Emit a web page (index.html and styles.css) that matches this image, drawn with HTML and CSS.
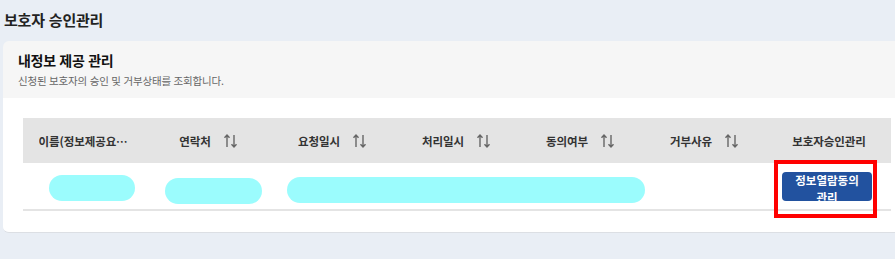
FILE: index.html
```html
<!DOCTYPE html>
<html lang="ko">
<head>
  <meta charset="UTF-8">
  <meta name="viewport" content="width=device-width, initial-scale=1.0">
  <title>보호자 승인관리</title>
  <link rel="stylesheet" href="styles.css">
</head>
<body>
<h1 class="page-title">보호자 승인관리</h1>

<div class="card">
  <div class="card-head">
    <h2>내정보 제공 관리</h2>
    <p>신청된 보호자의 승인 및 거부상태를 조회합니다.</p>
  </div>

  <div class="card-body">
    <table class="grid">
      <colgroup>
        <col><col><col><col><col><col><col>
      </colgroup>
      <thead>
        <tr>
          <th><span class="th-in"><span class="clip">이름(정보제공요청자)</span></span></th>
          <th><span class="th-in">연락처<svg class="sort" viewBox="0 0 16 16"><path d="M4 14V2M1.5 4.8L4 2l2.5 2.8"/><path d="M11 2v12M8.5 11.2L11 14l2.5-2.8"/></svg></span></th>
          <th><span class="th-in">요청일시<svg class="sort" viewBox="0 0 16 16"><path d="M4 14V2M1.5 4.8L4 2l2.5 2.8"/><path d="M11 2v12M8.5 11.2L11 14l2.5-2.8"/></svg></span></th>
          <th><span class="th-in">처리일시<svg class="sort" viewBox="0 0 16 16"><path d="M4 14V2M1.5 4.8L4 2l2.5 2.8"/><path d="M11 2v12M8.5 11.2L11 14l2.5-2.8"/></svg></span></th>
          <th><span class="th-in">동의여부<svg class="sort" viewBox="0 0 16 16"><path d="M4 14V2M1.5 4.8L4 2l2.5 2.8"/><path d="M11 2v12M8.5 11.2L11 14l2.5-2.8"/></svg></span></th>
          <th><span class="th-in">거부사유<svg class="sort" viewBox="0 0 16 16"><path d="M4 14V2M1.5 4.8L4 2l2.5 2.8"/><path d="M11 2v12M8.5 11.2L11 14l2.5-2.8"/></svg></span></th>
          <th><span class="th-in">보호자승인관리</span></th>
        </tr>
      </thead>
      <tbody>
        <tr>
          <td><span class="mask mask-name"></span></td>
          <td><span class="mask mask-tel"></span></td>
          <td colspan="3"><span class="mask mask-date"></span></td>
          <td></td>
          <td class="action-cell">
            <button class="agree-btn">정보열람동의 관리</button>
            <span class="mark"></span>
          </td>
        </tr>
      </tbody>
    </table>
  </div>
</div>
</body>
</html>
```

FILE: styles.css
```css
body {
  margin: 0;
  background: #e9eef5;
  font-family: "Noto Sans CJK KR", "Noto Sans", sans-serif;
  color: #222;
}

.page-title {
  margin: 0;
  padding: 9px 4px 0;
  height: 32px;
  font-size: 15px;
  font-weight: 600;
  letter-spacing: -0.2px;
  color: #222;
}

.card {
  margin: 0 0 0 3px;
  border-radius: 6px 0 0 6px;
  overflow: hidden;
  border-bottom: 1px solid #dcdfe4;
}

.card-head {
  background: #f6f6f6;
  height: 57px;
  padding: 0 15px;
  box-sizing: border-box;
}

.card-head h2 {
  margin: 0;
  padding-top: 9px;
  font-size: 14px;
  font-weight: 700;
  line-height: 20px;
  letter-spacing: -0.3px;
  color: #111;
}

.card-head p {
  margin: 3px 0 0;
  font-size: 10.5px;
  line-height: 16px;
  letter-spacing: -0.2px;
  color: #666;
}

.card-body {
  background: #fff;
  padding: 20px 4px 21px 20px;
}

.grid {
  width: 100%;
  border-collapse: collapse;
  table-layout: fixed;
}

.grid th {
  background: #e4e4e4;
  height: 45px;
  padding: 0 10px;
  font-size: 11.5px;
  font-weight: 600;
  color: #333;
  letter-spacing: -0.1px;
}

.th-in {
  display: flex;
  align-items: center;
  justify-content: center;
  gap: 12px;
  white-space: nowrap;
}

.clip {
  max-width: 93px;
  overflow: hidden;
  text-overflow: ellipsis;
  white-space: nowrap;
}

.sort {
  width: 16px;
  height: 16px;
  fill: none;
  stroke: #666;
  stroke-width: 1.4;
}

.grid td {
  height: 46px;
  padding: 0;
  border-bottom: 2px solid #e4e4e4;
  text-align: left;
  vertical-align: top;
}

.mask {
  display: block;
  height: 26px;
  border-radius: 13px;
  background: #9bfcfd;
}

.mask-name { width: 86px; margin: 12px 0 0 26px; }
.mask-tel { width: 97px; margin: 15px 0 0 18px; }
.mask-date { width: 358px; margin: 14px 0 0 16px; }

.action-cell {
  position: relative;
}

.agree-btn {
  width: 90px;
  height: 29px;
  margin: 9px 0 0 15px;
  padding: 0 4px;
  border: none;
  border-radius: 4px;
  background: #22529f;
  color: #fff;
  font-family: inherit;
  font-size: 11.5px;
  font-weight: 700;
  line-height: 17px;
  text-align: center;
  word-break: keep-all;
  overflow: visible;
  display: flex;
  align-items: flex-start;
  justify-content: center;
}

.mark {
  position: absolute;
  left: 7px;
  top: -3px;
  width: 103px;
  height: 58px;
  box-sizing: border-box;
  border: 4px solid #ff0000;
}
```
